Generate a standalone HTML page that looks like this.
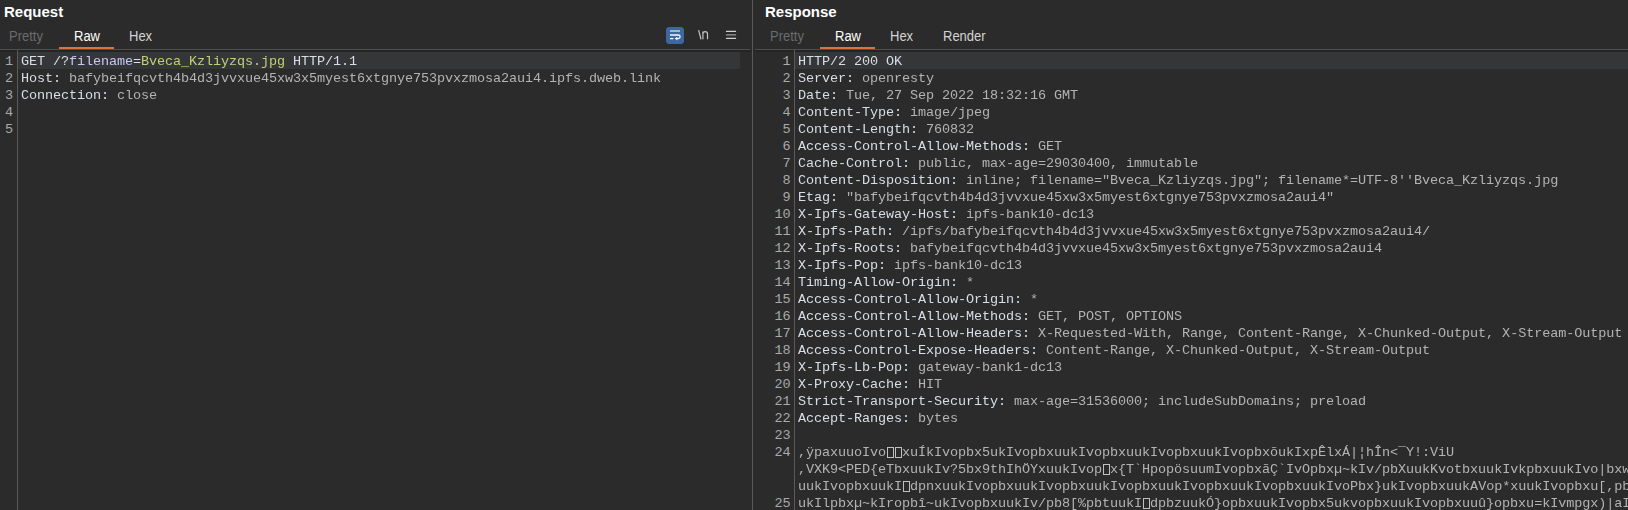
<!DOCTYPE html>
<html><head><meta charset="utf-8"><style>
html,body{margin:0;padding:0;}
body{width:1628px;height:510px;overflow:hidden;background:#2b2b2b;position:relative;font-family:"Liberation Sans",sans-serif;}
.a{position:absolute;}
.t{font-weight:bold;font-size:15px;color:#fff;line-height:18px;white-space:pre;}
.tab{font-size:13px;line-height:16px;white-space:pre;transform:scaleY(1.1);transform-origin:0 12.5px;}
.m{will-change:transform;font-family:"Liberation Mono",monospace;font-size:13.5px;letter-spacing:-0.1px;line-height:17px;white-space:pre;height:17px;}
.ln{font-family:"Liberation Mono",monospace;font-size:13.5px;letter-spacing:-0.1px;line-height:17px;white-space:pre;color:#a9a9a9;text-align:right;height:17px;}
.n{color:#d8dee6}.v{color:#b3b3b3}.p{color:#c6c8f5}.g{color:#c3cf73}
.bx{display:inline-block;box-sizing:border-box;width:7px;height:11px;border:1px solid #c0c0c0;margin-left:1px;vertical-align:top;margin-top:3px;}
.hl{background:#353638;height:17px;}
.hr{height:1px;background:#4f4f4f;}
.dk{height:2px;background:#242424;}
.vr{width:1px;background:#5a5a5a;}
</style></head><body>

<div class="a vr" style="left:752px;top:0;height:510px"></div>
<div class="a t" style="left:4px;top:3px">Request</div>
<div class="a t" style="left:765px;top:3px">Response</div>
<div class="a tab" style="left:9px;top:29px;color:#6b6b6b">Pretty</div>
<div class="a tab" style="left:74px;top:29px;color:#ffffff">Raw</div>
<div class="a tab" style="left:129px;top:29px;color:#d4d4d4">Hex</div>
<div class="a" style="left:59px;top:47px;width:55px;height:2px;background:#db733a"></div>
<div class="a tab" style="left:770px;top:29px;color:#6b6b6b">Pretty</div>
<div class="a tab" style="left:835px;top:29px;color:#ffffff">Raw</div>
<div class="a tab" style="left:890px;top:29px;color:#d4d4d4">Hex</div>
<div class="a tab" style="left:943px;top:29px;color:#d4d4d4">Render</div>
<div class="a" style="left:820px;top:47px;width:55px;height:2px;background:#db733a"></div>
<div class="a hr" style="left:0;top:49px;width:750px"></div>
<div class="a hr" style="left:755px;top:49px;width:873px"></div>
<div class="a dk" style="left:0;top:50px;width:750px"></div>
<div class="a dk" style="left:755px;top:50px;width:873px"></div>
<div class="a vr" style="left:17px;top:50px;height:460px"></div>
<div class="a vr" style="left:794px;top:50px;height:460px"></div>
<div class="a hl" style="left:18px;top:52px;width:722px"></div>
<div class="a hl" style="left:795px;top:52px;width:833px"></div>
<svg class="a" style="left:666px;top:27px" width="18" height="17" viewBox="0 0 18 17">
<path d="M2 0H16L18 2V15L16 17H2L0 15V2Z" fill="#3b67a2"/>
<path d="M4 4H14" stroke="#c3d1e6" stroke-width="1.5"/>
<path d="M4 8H12.3A1.8 1.8 0 0 1 12.3 11.6H10.5" stroke="#f4f7fb" stroke-width="1.3" fill="none"/>
<path d="M4 11.6H7.4" stroke="#f4f7fb" stroke-width="1.3"/>
<path d="M8.8 11.6L11.3 9.8V13.4Z" fill="#f4f7fb"/>
</svg>
<svg class="a" style="left:697px;top:29px" width="13" height="12" viewBox="0 0 13 12">
<g stroke="#c4c4c4" stroke-width="1.2" fill="none"><path d="M1.6 1.2L4.0 10.3"/><path d="M5.9 2.6V10.3M5.9 5Q5.9 2.6 8.2 2.6Q10.5 2.6 10.5 5V10.3"/></g></svg>
<svg class="a" style="left:725px;top:29px" width="13" height="12" viewBox="0 0 13 12">
<g stroke-width="1.3" stroke-linecap="round"><path d="M1.5 2.4H10.5" stroke="#cfcfcf"/><path d="M1.5 5.9H10.5" stroke="#9a9a9a"/><path d="M1.5 9.4H10.5" stroke="#cfcfcf"/></g></svg>

<div class="a ln" style="left:0;top:53px;width:13px">1</div>
<div class="a m" style="left:20.5px;top:53px"><span class="n">GET /?</span><span class="p">filename</span><span class="n">=</span><span class="g">Bveca_Kzliyzqs.jpg</span><span class="n"> HTTP/1.1</span></div>
<div class="a ln" style="left:0;top:70px;width:13px">2</div>
<div class="a m" style="left:20.5px;top:70px"><span class="n">Host: </span><span class="v">bafybeifqcvth4b4d3jvvxue45xw3x5myest6xtgnye753pvxzmosa2aui4.ipfs.dweb.link</span></div>
<div class="a ln" style="left:0;top:87px;width:13px">3</div>
<div class="a m" style="left:20.5px;top:87px"><span class="n">Connection: </span><span class="v">close</span></div>
<div class="a ln" style="left:0;top:104px;width:13px">4</div>
<div class="a m" style="left:20.5px;top:104px"></div>
<div class="a ln" style="left:0;top:121px;width:13px">5</div>
<div class="a m" style="left:20.5px;top:121px"></div>
<div class="a ln" style="left:760px;top:53px;width:30.5px">1</div>
<div class="a m" style="left:797.5px;top:53px"><span class="n">HTTP/2 200 OK</span></div>
<div class="a ln" style="left:760px;top:70px;width:30.5px">2</div>
<div class="a m" style="left:797.5px;top:70px"><span class="n">Server: </span><span class="v">openresty</span></div>
<div class="a ln" style="left:760px;top:87px;width:30.5px">3</div>
<div class="a m" style="left:797.5px;top:87px"><span class="n">Date: </span><span class="v">Tue, 27 Sep 2022 18:32:16 GMT</span></div>
<div class="a ln" style="left:760px;top:104px;width:30.5px">4</div>
<div class="a m" style="left:797.5px;top:104px"><span class="n">Content-Type: </span><span class="v">image/jpeg</span></div>
<div class="a ln" style="left:760px;top:121px;width:30.5px">5</div>
<div class="a m" style="left:797.5px;top:121px"><span class="n">Content-Length: </span><span class="v">760832</span></div>
<div class="a ln" style="left:760px;top:138px;width:30.5px">6</div>
<div class="a m" style="left:797.5px;top:138px"><span class="n">Access-Control-Allow-Methods: </span><span class="v">GET</span></div>
<div class="a ln" style="left:760px;top:155px;width:30.5px">7</div>
<div class="a m" style="left:797.5px;top:155px"><span class="n">Cache-Control: </span><span class="v">public, max-age=29030400, immutable</span></div>
<div class="a ln" style="left:760px;top:172px;width:30.5px">8</div>
<div class="a m" style="left:797.5px;top:172px"><span class="n">Content-Disposition: </span><span class="v">inline; filename="Bveca_Kzliyzqs.jpg"; filename*=UTF-8''Bveca_Kzliyzqs.jpg</span></div>
<div class="a ln" style="left:760px;top:189px;width:30.5px">9</div>
<div class="a m" style="left:797.5px;top:189px"><span class="n">Etag: </span><span class="v">"bafybeifqcvth4b4d3jvvxue45xw3x5myest6xtgnye753pvxzmosa2aui4"</span></div>
<div class="a ln" style="left:760px;top:206px;width:30.5px">10</div>
<div class="a m" style="left:797.5px;top:206px"><span class="n">X-Ipfs-Gateway-Host: </span><span class="v">ipfs-bank10-dc13</span></div>
<div class="a ln" style="left:760px;top:223px;width:30.5px">11</div>
<div class="a m" style="left:797.5px;top:223px"><span class="n">X-Ipfs-Path: </span><span class="v">/ipfs/bafybeifqcvth4b4d3jvvxue45xw3x5myest6xtgnye753pvxzmosa2aui4/</span></div>
<div class="a ln" style="left:760px;top:240px;width:30.5px">12</div>
<div class="a m" style="left:797.5px;top:240px"><span class="n">X-Ipfs-Roots: </span><span class="v">bafybeifqcvth4b4d3jvvxue45xw3x5myest6xtgnye753pvxzmosa2aui4</span></div>
<div class="a ln" style="left:760px;top:257px;width:30.5px">13</div>
<div class="a m" style="left:797.5px;top:257px"><span class="n">X-Ipfs-Pop: </span><span class="v">ipfs-bank10-dc13</span></div>
<div class="a ln" style="left:760px;top:274px;width:30.5px">14</div>
<div class="a m" style="left:797.5px;top:274px"><span class="n">Timing-Allow-Origin: </span><span class="v">*</span></div>
<div class="a ln" style="left:760px;top:291px;width:30.5px">15</div>
<div class="a m" style="left:797.5px;top:291px"><span class="n">Access-Control-Allow-Origin: </span><span class="v">*</span></div>
<div class="a ln" style="left:760px;top:308px;width:30.5px">16</div>
<div class="a m" style="left:797.5px;top:308px"><span class="n">Access-Control-Allow-Methods: </span><span class="v">GET, POST, OPTIONS</span></div>
<div class="a ln" style="left:760px;top:325px;width:30.5px">17</div>
<div class="a m" style="left:797.5px;top:325px"><span class="n">Access-Control-Allow-Headers: </span><span class="v">X-Requested-With, Range, Content-Range, X-Chunked-Output, X-Stream-Output</span></div>
<div class="a ln" style="left:760px;top:342px;width:30.5px">18</div>
<div class="a m" style="left:797.5px;top:342px"><span class="n">Access-Control-Expose-Headers: </span><span class="v">Content-Range, X-Chunked-Output, X-Stream-Output</span></div>
<div class="a ln" style="left:760px;top:359px;width:30.5px">19</div>
<div class="a m" style="left:797.5px;top:359px"><span class="n">X-Ipfs-Lb-Pop: </span><span class="v">gateway-bank1-dc13</span></div>
<div class="a ln" style="left:760px;top:376px;width:30.5px">20</div>
<div class="a m" style="left:797.5px;top:376px"><span class="n">X-Proxy-Cache: </span><span class="v">HIT</span></div>
<div class="a ln" style="left:760px;top:393px;width:30.5px">21</div>
<div class="a m" style="left:797.5px;top:393px"><span class="n">Strict-Transport-Security: </span><span class="v">max-age=31536000; includeSubDomains; preload</span></div>
<div class="a ln" style="left:760px;top:410px;width:30.5px">22</div>
<div class="a m" style="left:797.5px;top:410px"><span class="n">Accept-Ranges: </span><span class="v">bytes</span></div>
<div class="a ln" style="left:760px;top:427px;width:30.5px">23</div>
<div class="a m" style="left:797.5px;top:427px"></div>
<div class="a ln" style="left:760px;top:444px;width:30.5px">24</div>
<div class="a m" style="left:797.5px;top:444px"><span class="v">,ÿpaxuuoIvo<span class="bx"></span><span class="bx"></span>xuÍkIvopbx5ukIvopbxuukIvopbxuukIvopbxuukIvopbxõukIxpÊlxÁ|¦hÎn&lt;¯Y!:ViU</span></div>
<div class="a m" style="left:797.5px;top:461px"><span class="v">,VXK9&lt;PED{eTbxuukIv?5bx9thIhÖYxuukIvop<span class="bx"></span>x{T`HpopösuumIvopbxãÇ`IvOpbxµ~kIv/pbXuukKvotbxuukIvkpbxuukIvo|bxw</span></div>
<div class="a m" style="left:797.5px;top:478px"><span class="v">uukIvopbxuukI<span class="bx"></span>dpnxuukIvopbxuukIvopbxuukIvopbxuukIvopbxuukIvopbxuukIvoPbx}ukIvopbxuukAVop*xuukIvopbxu[,pb</span></div>
<div class="a ln" style="left:760px;top:495px;width:30.5px">25</div>
<div class="a m" style="left:797.5px;top:495px"><span class="v">ukIlpbxµ~kIropbî~ukIvopbxuukIv/pb8[%pbtuukI<span class="bx"></span>dpbzuukÓ}opbxuukIvopbx5ukvopbxuukIvopbxuuû}opbxu=kIvmpgx)|aI</span></div>
</body></html>
